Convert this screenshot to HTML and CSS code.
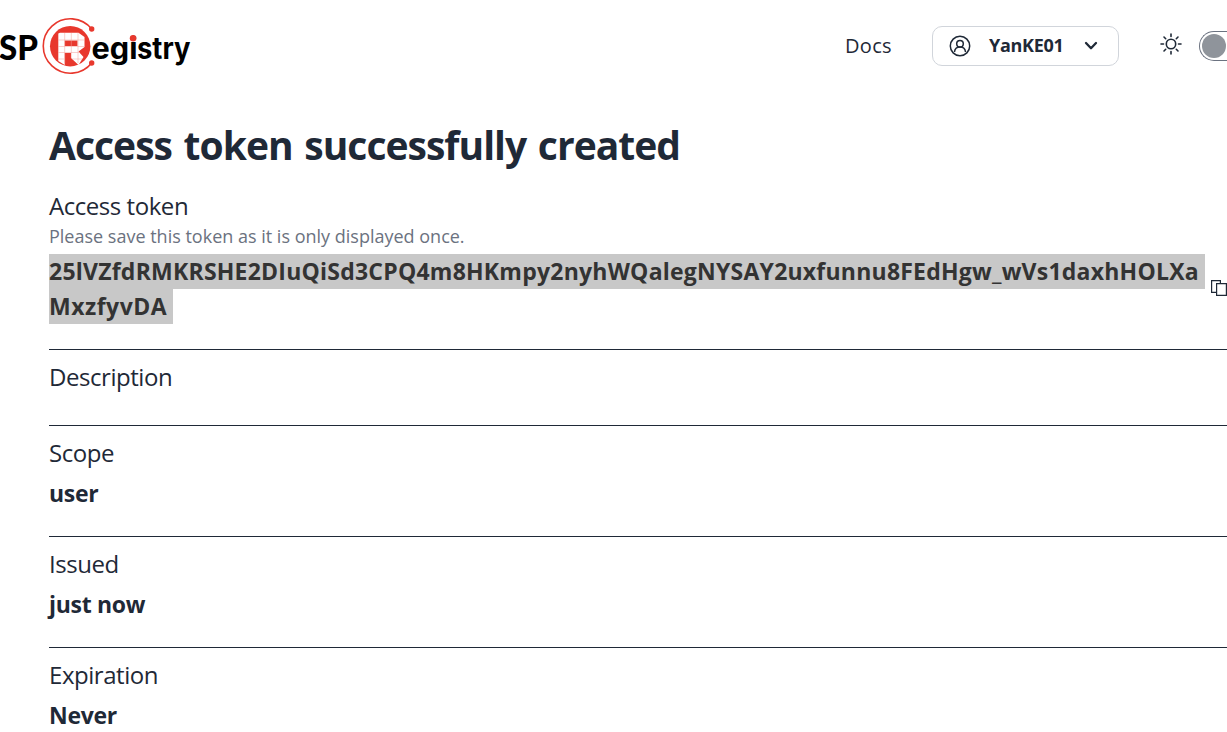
FILE: index.html
```
<!DOCTYPE html>
<html lang="en">
<head>
<meta charset="utf-8">
<title>Access token</title>
<link rel="stylesheet" href="styles.css">
</head>
<body>
<header class="header">
  <svg class="logo" width="200" height="80" viewBox="0 0 200 80">
    <text class="logo-text logo-caps" x="-1" y="59.500" textLength="39" lengthAdjust="spacingAndGlyphs">SP</text>
    <path d="M91.7 29A27.2 27.2 0 1 0 91.7 63" fill="none" stroke="#e8382d" stroke-width="1.6"/>
    <circle cx="91.7" cy="29" r="2.7" fill="#e8382d"/>
    <circle cx="91.7" cy="63" r="2.7" fill="#e8382d"/>
    <circle cx="70.2" cy="46.2" r="20.2" fill="#e8382d"/>
    <path fill="#fff" d="M58.3 33.500L60 32.700H78.500L84.500 37V47L78.500 51.500L83.500 57L78.500 65L71 58V53H64.700V65L58.300 61Z"/>
    <path fill="#e8382d" d="M64.700 40.500H77.500V46H64.700Z"/>
    <path fill="none" stroke="#f3a09a" stroke-width=".5" d="M64.700 33V63M71.300 33V58M78 33V63M58.300 40H84M58.300 46.500H84M58.300 52.500H80M58.300 59H64M72 59H82"/>
    <text class="logo-text" y="58.800" x="91.500" textLength="46" lengthAdjust="spacingAndGlyphs">egi</text>
    <text class="logo-text" y="58.800" x="137" textLength="53.500" lengthAdjust="spacingAndGlyphs">stry</text>
    <circle cx="133.100" cy="38.300" r="3.300" fill="#e8382d"/>
  </svg>
  <nav class="nav">
    <a class="docs">Docs</a>
    <button class="account">
      <svg width="22" height="22" viewBox="0 0 22 22" fill="none" stroke="#1f2937" stroke-width="1.500"><circle cx="11" cy="11" r="9.700"/><circle cx="11" cy="8.700" r="3.300"/><path d="M5.500 17C6 10.300 16 10.300 16.500 17"/></svg>
      <span class="username">YanKE01</span>
      <svg class="chevron" width="14" height="10" viewBox="0 0 14 10" fill="none" stroke="#1f2937" stroke-width="2.300" stroke-linecap="round" stroke-linejoin="round"><path d="M2 2L7 7.200L12 2"/></svg>
    </button>
    <svg class="sun" width="22" height="22" viewBox="0 0 22 22" fill="none" stroke="#1f2937" stroke-width="1.600" stroke-linecap="round"><circle cx="11" cy="11" r="4.700"/><path d="M11 1V3.500M11 18.500V21M1 11H3.500M18.500 11H21M4 4L5.700 5.700M16.300 16.300L18 18M4 18L5.700 16.300M16.300 5.700L18 4"/></svg>
    <span class="toggle"><span class="knob"></span></span>
  </nav>
</header>
<main class="main">
  <h1 class="title">Access token successfully created</h1>
  <section class="row row-token">
    <div class="label">Access token</div>
    <div class="help">Please save this token as it is only displayed once.</div>
    <div class="token-line">
      <div class="token"><mark class="t1">25lVZfdRMKRSHE2DIuQiSd3CPQ4m8HKmpy2nyhWQalegNYSAY2uxfunnu8FEdHgw_wVs1daxhHOLXa</mark><br><mark class="t2">MxzfyvDA</mark></div>
      <svg class="copy" width="16" height="16" viewBox="0 0 16 16" fill="none" stroke="#1f2937" stroke-width="1.200"><path d="M5 12.400H.6V.6H9.400V3"/><path d="M5.600 3.600H15.400V15.400H5.600Z"/></svg>
    </div>
  </section>
  <section class="row row-empty"><div class="label">Description</div></section>
  <section class="row"><div class="label">Scope</div><div class="value">user</div></section>
  <section class="row"><div class="label">Issued</div><div class="value">just now</div></section>
  <section class="row row-last"><div class="label">Expiration</div><div class="value">Never</div></section>
</main>
</body>
</html>
```
FILE: styles.css
```
* { box-sizing: border-box; }
html, body { height: 732px; overflow: hidden; }
body { margin: 0; background: #fff; color: #1f2937; font-family: "Open Sans", "Noto Sans", sans-serif; }
.header { height: 92px; display: flex; justify-content: space-between; overflow: hidden; }
.logo { flex: none; }
.logo-text { font-family: Inter, sans-serif; font-weight: 700; font-size: 30px; fill: #000; }
.logo-caps { font-family: Lato, sans-serif; font-size: 34px; font-weight: 900; }
.nav { display: flex; height: 92px; align-items: center; flex: none; }
.docs { font-size: 20px; letter-spacing: .3px; width: 47px; margin-right: 40px; padding-bottom: 2px; white-space: nowrap; }
.account { width: 187px; height: 40px; border: 1px solid #d1d5db; border-radius: 10px; background: #fff; display: flex; align-items: center; padding: 0 0 0 16px; font-family: inherit; color: inherit; }
.username { font-size: 18px; font-weight: 700; letter-spacing: -.3px; width: 75px; margin-left: 18px; padding-bottom: 2px; text-align: left; white-space: nowrap; }
.chevron { margin-left: 20px; }
.sun { margin: 0 17px 4px 41px; }
.toggle { width: 28px; height: 30px; border: 1px solid #6b7280; border-right: 0; border-radius: 15px 0 0 15px; padding: 2px; overflow: hidden; }
.knob { display: block; width: 24px; height: 24px; border-radius: 50%; background: #8f949b; }
.main { padding-left: 49px; }
.title { margin: 26px 0 0; font-size: 39px; line-height: 54px; height: 71px; font-weight: 700; letter-spacing: -.98px; word-spacing: 2.5px; white-space: nowrap; }
.row { height: 111px; border-bottom: 1px solid #1f2937; padding-top: 9px; white-space: nowrap; }
.label { font-size: 24px; line-height: 35px; height: 36px; letter-spacing: -.45px; }
.value { font-size: 23px; line-height: 35px; margin-top: 5px; font-weight: 700; letter-spacing: -.3px; }
.help { font-size: 18px; line-height: 25px; color: #6b7280; }
.row-token { height: 162px; padding-top: 0; margin-top: -1px; }
.row-empty { height: 76px; }
.row-last { height: 84px; border: 0; }
.token-line { display: flex; align-items: center; gap: 6px; margin-top: 5px; }
.token { width: 1156px; font-size: 23px; line-height: 35px; font-weight: 700; }
.token mark { display: inline-block; height: 35px; vertical-align: top; background: #c8c8c8; color: #333; }
.t1 { width: 1156px; letter-spacing: .228px; }
.t2 { width: 124px; letter-spacing: .5px; }
.copy { flex: none; margin-bottom: 2px; }
```
